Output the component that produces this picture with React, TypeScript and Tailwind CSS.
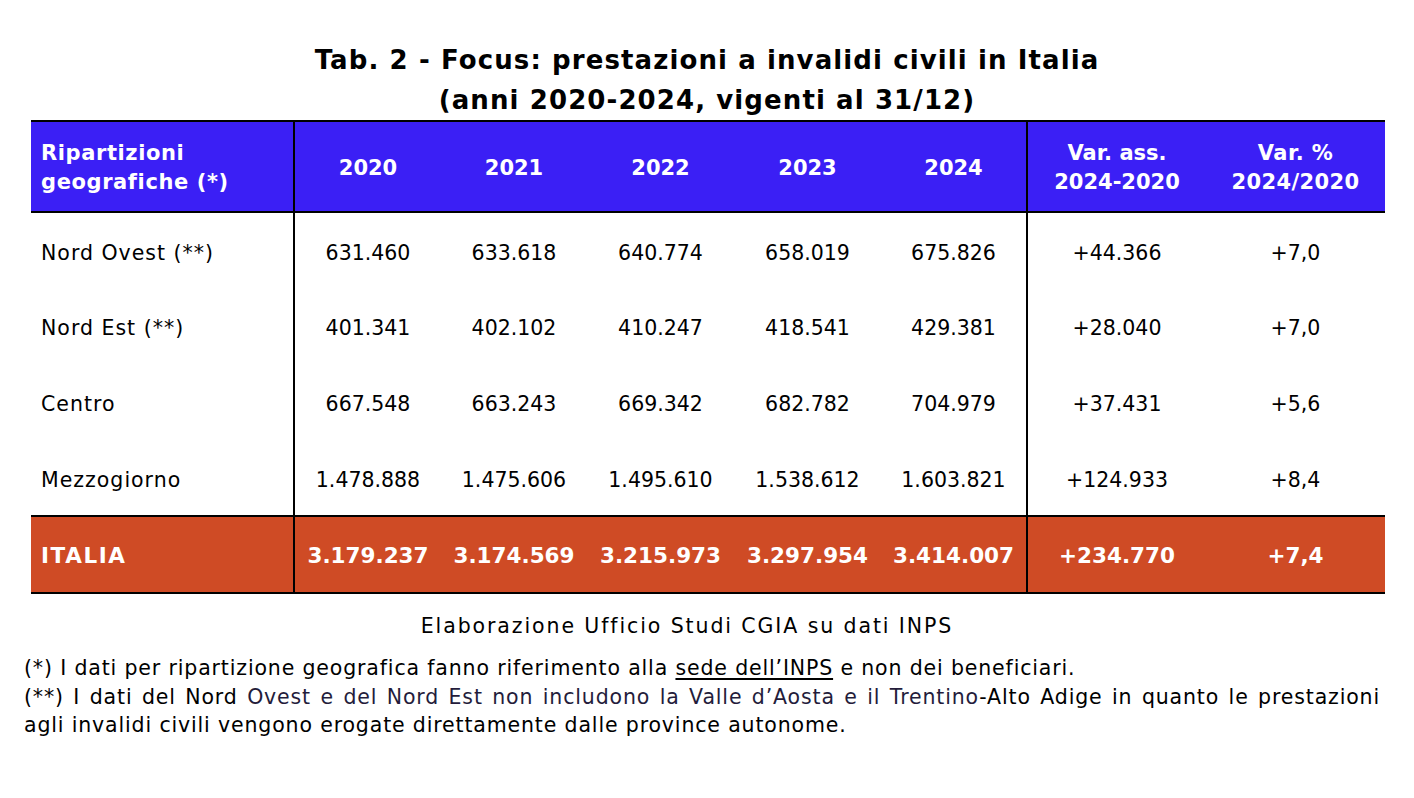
import React from "react";

// Dati tabella
const righe = [
  { nome: "Nord Ovest (**)", valori: ["631.460", "633.618", "640.774", "658.019", "675.826"], ass: "+44.366", perc: "+7,0" },
  { nome: "Nord Est (**)", valori: ["401.341", "402.102", "410.247", "418.541", "429.381"], ass: "+28.040", perc: "+7,0" },
  { nome: "Centro", valori: ["667.548", "663.243", "669.342", "682.782", "704.979"], ass: "+37.431", perc: "+5,6" },
  { nome: "Mezzogiorno", valori: ["1.478.888", "1.475.606", "1.495.610", "1.538.612", "1.603.821"], ass: "+124.933", perc: "+8,4" },
];

const totale = {
  valori: ["3.179.237", "3.174.569", "3.215.973", "3.297.954", "3.414.007"],
  ass: "+234.770",
  perc: "+7,4",
};

const anni = ["2020", "2021", "2022", "2023", "2024"];

export default function App() {
  return (
    <div className="w-[1414px] h-[798px] bg-white text-black font-['DejaVu_Sans',Verdana,sans-serif]">
      <div className="pt-[40px] text-center font-bold text-[26px] leading-[40px] tracking-[1.1px]">
        <p>Tab. 2 - Focus: prestazioni a invalidi civili in Italia</p>
        <p>(anni 2020-2024, vigenti al 31/12)</p>
      </div>

      <div className="pl-[31px]">
        <table className="w-[1354px] border-collapse table-fixed">
          <colgroup>
            <col className="w-[263px]" />
            <col className="w-[147px]" />
            <col className="w-[146px]" />
            <col className="w-[147px]" />
            <col className="w-[147px]" />
            <col className="w-[146px]" />
            <col className="w-[179px]" />
            <col className="w-[179px]" />
          </colgroup>
          <thead>
            <tr className="h-[91px] bg-[#3b1ff5] text-white font-bold text-[21px] leading-[29px] border-t-2 border-b-2 border-black">
              <th className="text-left pl-[10px] pt-[3px] font-bold tracking-[0.6px] border-r-2 border-black">
                Ripartizioni
                <br />
                geografiche (*)
              </th>
              {anni.map((a, i) => (
                <th key={a} className={`text-center pt-[3px] font-bold ${i === 4 ? "border-r-2 border-black" : ""}`}>
                  {a}
                </th>
              ))}
              <th className="text-center pt-[3px] font-bold">
                Var. ass.
                <br />
                2024-2020
              </th>
              <th className="text-center pt-[3px] font-bold tracking-[0.4px]">
                Var. %
                <br />
                2024/2020
              </th>
            </tr>
          </thead>
          <tbody>
            {righe.map((r, idx) => (
              <tr key={idx} className="h-[76px] text-[20.5px]">
                <td className="pl-[10px] pt-[5px] tracking-[1px] border-r-2 border-black">{r.nome}</td>
                {r.valori.map((v, i) => (
                  <td key={i} className={`text-center pt-[5px] ${i === 4 ? "border-r-2 border-black" : ""}`}>
                    {v}
                  </td>
                ))}
                <td className="text-center pt-[5px]">{r.ass}</td>
                <td className="text-center pt-[5px]">{r.perc}</td>
              </tr>
            ))}
            <tr className="h-[77px] bg-[#cf4b25] text-white font-bold text-[21.5px] border-t-2 border-b-2 border-black">
              <td className="pl-[10px] pt-[4px] tracking-[1.6px] border-r-2 border-black">ITALIA</td>
              {totale.valori.map((v, i) => (
                <td key={i} className={`text-center pt-[4px] ${i === 4 ? "border-r-2 border-black" : ""}`}>
                  {v}
                </td>
              ))}
              <td className="text-center pt-[4px]">{totale.ass}</td>
              <td className="text-center pt-[4px]">{totale.perc}</td>
            </tr>
          </tbody>
        </table>
      </div>

      <p className="mt-[18px] pr-[40px] text-center text-[20.5px] leading-[28px] tracking-[1.9px]">
        Elaborazione Ufficio Studi CGIA su dati INPS
      </p>

      <div className="mt-[14px] pl-[24px] w-[1380px] text-[20.5px] leading-[28px] tracking-[0.85px]">
        <p>
          (*) I dati per ripartizione geografica fanno riferimento alla{" "}
          <span className="underline underline-offset-[3px]">sede dell’INPS</span> e non dei beneficiari.
        </p>
        <p className="mt-[1px] text-justify [text-align-last:justify]">
          (**) I dati del Nord{" "}
          <span className="text-[#241c3b]">
            Ovest e del Nord Est non includono la Valle d’Aosta e il Trentino
          </span>
          -Alto Adige in quanto le prestazioni
        </p>
        <p>agli invalidi civili vengono erogate direttamente dalle province autonome.</p>
      </div>
    </div>
  );
}
